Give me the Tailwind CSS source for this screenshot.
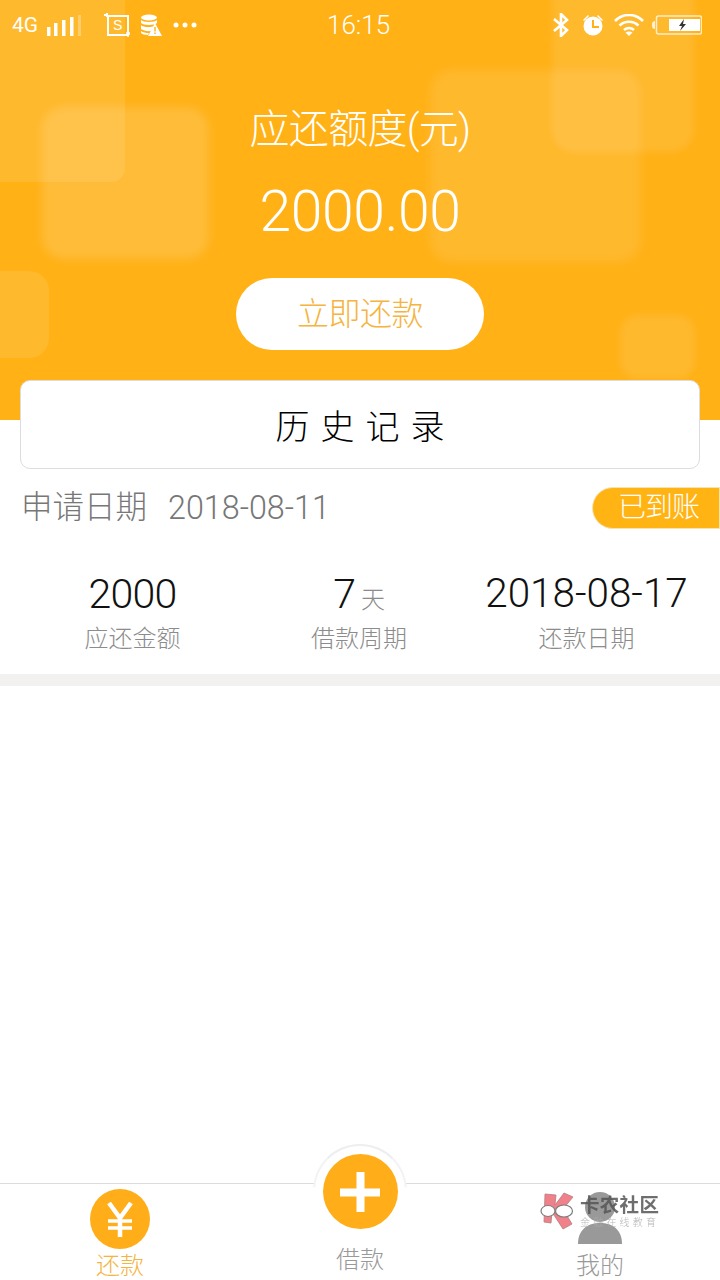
<!doctype html>
<html><head><meta charset="utf-8"><script src="https://cdn.jsdelivr.net/npm/@tailwindcss/browser@4"></script></head>
<body>
<div class="relative flex h-[1280px] w-[720px] flex-col overflow-hidden bg-white font-['Roboto','Noto_Sans_CJK_SC',sans-serif] font-light">
  <header class="relative h-[420px] shrink-0 overflow-hidden bg-[#ffb116] text-white">
    <div class="absolute left-[-30px] top-[-30px] h-[212px] w-[155px] rounded-[14px] bg-white/10"></div>
    <div class="absolute left-[42px] top-[107px] h-[152px] w-[167px] rounded-[22px] bg-white/15 blur-[4px]"></div>
    <div class="absolute left-[430px] top-[70px] h-[192px] w-[211px] rounded-[22px] bg-white/10 blur-[4px]"></div>
    <div class="absolute left-[552px] top-[-30px] h-[182px] w-[142px] rounded-[22px] bg-white/10 blur-[3px]"></div>
    <div class="absolute left-[-30px] top-[271px] h-[87px] w-[79px] rounded-[20px] bg-white/10"></div>
    <div class="absolute left-[620px] top-[315px] h-[64px] w-[75px] rounded-[18px] bg-white/10 blur-[3px]"></div>

    <div class="relative flex h-[50px] items-center pl-[12px] pr-[17px]">
      <span class="w-[33px] text-[21px] font-normal leading-none">4G</span>
      <svg class="h-[22px] w-[36px]" viewBox="0 0 36 22" fill="#fff"><rect x="2" y="13" width="3.500" height="9"/><rect x="9" y="9" width="3.500" height="13"/><rect x="17" y="6" width="3.500" height="16"/><rect x="25" y="3" width="3.500" height="19"/><rect x="33" y="1" width="3" height="21" opacity=".3"/></svg>
      <svg class="ml-[23px] h-[24px] w-[26px]" viewBox="0 0 26 24" fill="none" stroke="#fff" stroke-width="2"><path d="M0 2h4M3 0v4"/><path d="M4 3h20v19H4z"/><path d="M22 20h4v2M24 20v4" stroke-width="1.500"/><text x="9" y="17" font-size="14" fill="#fff" stroke="none" font-family="Liberation Sans">S</text></svg>
      <svg class="ml-[10px] h-[22px] w-[22px]" viewBox="0 0 22 22" fill="#fff"><ellipse cx="9" cy="3.500" rx="8" ry="3"/><path d="M1 6c2 2.500 14 2.500 16 0v3c-2 2.500-14 2.500-16 0zM1 11c2 2.500 10 2.500 13 1l-3 5c-4 .5-8-.5-10-2zM1 17c2 1.500 5 2 8 2l-1 2c-3 0-6-1-7-2z"/><path d="M15 9l7 13H8z"/><path d="M14.300 13h1.400v4.500h-1.400zM14.300 18.500h1.400v1.500h-1.400z" fill="#ffb116"/></svg>
      <svg class="ml-[11px] h-[6px] w-[24px]" viewBox="0 0 24 6" fill="#fff"><circle cx="3" cy="3" r="2.500"/><circle cx="12" cy="3" r="2.500"/><circle cx="21" cy="3" r="2.500"/></svg>
      <span class="ml-[130px] w-[63px] text-[26px] leading-none">16:15</span>
      <svg class="ml-[163px] h-[24px] w-[16px]" viewBox="0 0 16 24" fill="none" stroke="#fff" stroke-width="2.600"><path d="M1 6l13 11-6 6V1l6 6L1 18"/></svg>
      <svg class="ml-[13px] h-[22px] w-[22px]" viewBox="0 0 22 22" fill="#fff"><circle cx="11" cy="12" r="9.500"/><path d="M11 6v7h6" fill="none" stroke="#ffb116" stroke-width="2"/><path d="M1 6l5-5 1 1-5 5zM21 6l-5-5-1 1 5 5z"/></svg>
      <svg class="ml-[10px] h-[22px] w-[30px]" viewBox="0 0 30 22" fill="none" stroke="#fff" stroke-width="2.600"><path d="M1 7c8-8 20-8 28 0M5.500 11.500c5.500-5 13.500-5 19 0M10 16c3-2.500 7-2.500 10 0"/><path d="M11.500 18.500L15 22l3.500-3.500c-2-1.500-5-1.500-7 0z" fill="#fff" stroke="none"/></svg>
      <svg class="ml-[8px] h-[20px] w-[50px]" viewBox="0 0 50 20"><path d="M3 6v8c-2 0-3-1-3-4s1-4 3-4z" fill="#fff" opacity=".8"/><rect x="4.500" y="1" width="45" height="18" rx="2" fill="none" stroke="#fff" opacity=".75" stroke-width="1.500"/><rect x="17" y="4" width="31" height="12" fill="#fff"/><path d="M28 16l2-5h-3l5-7-1 5h3z" fill="#333"/></svg>
    </div>

    <div class="relative flex flex-col items-center">
      <h1 class="mt-[56px] h-[48px] text-[40px] font-light leading-[48px] tracking-[-0.700px]">应还额度(元)</h1>
      <p class="mt-[26px] h-[64px] text-[57px] leading-[64px] tracking-[-0.300px]">2000.00</p>
      <button class="mt-[34px] flex h-[72px] w-[248px] items-center justify-center rounded-full bg-white text-[32px] font-light tracking-[-0.500px] text-[#f5b440]">立即还款</button>
    </div>
  </header>

  <button class="relative mx-[20px] -mt-[40px] flex h-[89px] shrink-0 items-center justify-center rounded-[10px] border border-[#dddddd] bg-white pl-[11px] pt-[6px] text-[34px] font-light tracking-[11px] text-black">历史记录</button>

  <div class="mt-[17px] flex h-[44px] shrink-0 items-center justify-between pl-[21px]">
    <p class="flex items-center gap-[21px] text-[#777]"><span class="text-[31.500px]">申请日期</span><span class="text-[32.300px]">2018-08-11</span></p>
    <span class="flex h-[42px] w-[128px] items-center justify-end rounded-l-[21px] border border-[#f5e3b0] bg-[#ffb414] pr-[20px] text-[28px] tracking-[-1px] text-white">已到账</span>
  </div>

  <div class="mt-[41px] grid h-[85px] shrink-0 grid-cols-[265px_188px_1fr] text-center">
    <div class="flex flex-col items-center">
      <p class="h-[46px] text-[41px] leading-[46px] tracking-[-0.800px] text-[#111]">2000</p>
      <p class="mt-[5px] text-[24px] leading-[34px] text-[#8c8c8c]">应还金额</p>
    </div>
    <div class="flex flex-col items-center">
      <p class="h-[46px] leading-[46px] text-[#111]"><span class="text-[41px]">7</span><span class="ml-[5px] text-[24px] text-[#8c8c8c]">天</span></p>
      <p class="mt-[5px] text-[24px] leading-[34px] text-[#8c8c8c]">借款周期</p>
    </div>
    <div class="flex flex-col items-center">
      <p class="h-[46px] text-[40.400px] leading-[46px] text-[#111]">2018-08-17</p>
      <p class="mt-[5px] text-[24px] leading-[34px] text-[#8c8c8c]">还款日期</p>
    </div>
  </div>

  <div class="mt-[18px] h-[12px] shrink-0 bg-[#f3f1ef]"></div>
  <div class="flex-1"></div>

  <nav class="relative grid h-[97px] shrink-0 grid-cols-3 border-t border-[#dcdcdc] bg-white text-[24px]">
    <div class="flex flex-col items-center pt-[5px] text-[#f5b440]">
      <div class="flex h-[60px] w-[60px] items-center justify-center rounded-full bg-[#ffae1a]">
        <svg class="h-[35px] w-[26px]" viewBox="0 0 26 35" fill="none" stroke="#fff" stroke-width="4.500"><path d="M2 1l11 15L24 1M13 16v19" /><path d="M1 19h24M1 26h24" stroke-width="3.500"/></svg>
      </div>
      <span class="mt-[1px] leading-[32px]">还款</span>
    </div>
    <div class="relative flex flex-col items-center text-[#999]">
      <div class="absolute -top-[40px] h-[94px] w-[94px] rounded-full border-2 border-[#eeeeee] border-b-transparent border-l-[#f3f3f3] border-r-[#f3f3f3] bg-white [clip-path:inset(0_0_54%_0)]"></div>
      <div class="absolute -top-[30px] flex h-[75px] w-[75px] items-center justify-center rounded-full bg-[#ffae1a]">
        <svg class="h-[40px] w-[40px]" viewBox="0 0 40 40" fill="#fff"><rect x="16.500" width="8" height="40"/><rect y="16.500" width="40" height="8"/></svg>
      </div>
      <span class="mt-[60px] leading-[32px]">借款</span>
    </div>
    <div class="flex flex-col items-center pt-[8px] text-[#999]">
      <svg class="h-[52px] w-[44px]" viewBox="0 0 44 52" fill="#999"><circle cx="22" cy="15" r="15"/><path d="M0 52c0-14 9-21 22-21s22 7 22 21z"/></svg>
      <span class="mt-[6px] leading-[32px]">我的</span>
    </div>
  </nav>

  <div class="absolute left-[540px] top-[1192px] flex items-start opacity-85">
    <svg class="h-[38px] w-[34px]" viewBox="0 0 34 38"><path d="M5 2l11 1-1 10L24 1l9 4-10 12 9 15-9 5-11-17-1 11-7-1z" fill="#ee6a75" stroke="#a66" stroke-width=".8"/><ellipse cx="8" cy="19" rx="7" ry="5.500" fill="#fff" stroke="#666" stroke-width="1.200"/><ellipse cx="24" cy="19" rx="8.500" ry="6" fill="#fff" stroke="#666" stroke-width="1.200"/></svg>
    <div class="ml-[6px] mt-[2px] flex flex-col">
      <span class="text-[19.500px] font-bold leading-[24px] tracking-[0.300px] text-[#555]">卡农社区</span>
      <span class="-mt-[1px] text-[10px] leading-[12px] tracking-[3.200px] text-[#aaa]">金融在线教育</span>
    </div>
  </div>
</div>
</body></html>
